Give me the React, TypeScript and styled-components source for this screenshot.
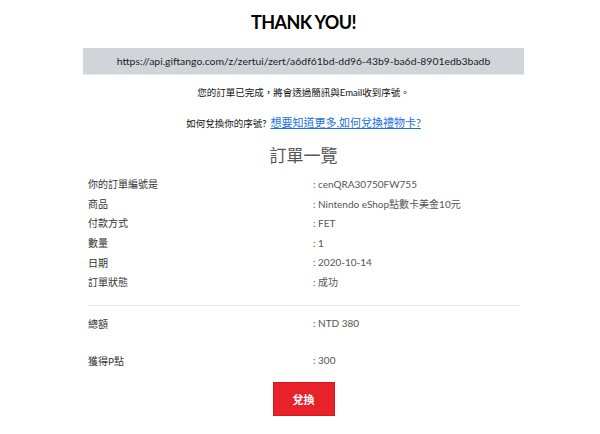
import React from 'react'
import styled, { createGlobalStyle } from 'styled-components'

const GlobalStyle = createGlobalStyle`
    body {
        margin: 0;
        background: #fff;
        font-family: Lato, "Noto Sans CJK TC", sans-serif;
        color: #333;
    }
`

const Page = styled.div`
    width: 441px;
    margin-left: 83px;
    padding-top: 10px;
    display: flex;
    flex-direction: column;
`

const Title = styled.h1`
    margin: 0;
    font-size: 18px;
    line-height: 24px;
    font-weight: 700;
    color: #000;
    text-align: center;
    letter-spacing: -0.6px;
`

const UrlBar = styled.div`
    margin-top: 14px;
    height: 27px;
    background: #d1d5da;
    border-bottom: 1px solid #e6e8eb;
    box-sizing: border-box;
    display: flex;
    align-items: center;
    justify-content: center;
    white-space: nowrap;
    font-size: 10.4px;
    color: #222;
`

const Message = styled.p<{ $gap: number }>`
    margin: ${p => p.$gap}px 0 0;
    font-size: 9.5px;
    line-height: 16px;
    color: #111;
    text-align: center;
`

const HelpLink = styled.a`
    font-size: 11px;
    color: #1a6fe0;
    text-decoration: underline;
    margin-left: 4px;
`

const Heading = styled.h2`
    margin: 12px 0 0;
    font-size: 17px;
    line-height: 24px;
    font-weight: 400;
    color: #555;
    text-align: center;
`

const DetailList = styled.div<{ $gap: number }>`
    margin-top: ${p => p.$gap}px;
    padding: 0 4px 0 5px;
    display: flex;
    flex-direction: column;
`

const DetailRow = styled.div<{ $height: number }>`
    display: grid;
    grid-template-columns: 225px 1fr;
    height: ${p => p.$height}px;
    align-items: center;
    font-size: 10px;
    color: #333;

    > span + span {
        color: #555;
    }
`

const Divider = styled.hr`
    margin: 13px 4px 0 5px;
    border: 0;
    border-top: 1px solid #e6e6e6;
`

const RedeemButton = styled.button`
    align-self: center;
    margin-top: 12px;
    width: 62px;
    height: 34px;
    background: #e8222b;
    border: 1px solid #e0141e;
    color: #fff;
    font-family: Lato, "Noto Sans CJK TC", sans-serif;
    font-size: 11px;
    font-weight: 700;
    cursor: pointer;
`

const orderDetails = [
    { label: '你的訂單編號是', value: 'cenQRA30750FW755' },
    { label: '商品', value: 'Nintendo eShop點數卡美金10元' },
    { label: '付款方式', value: 'FET' },
    { label: '數量', value: '1' },
    { label: '日期', value: '2020-10-14' },
    { label: '訂單狀態', value: '成功' },
]

const App: React.FC = () => {
    return (
        <>
            <GlobalStyle />
            <Page>
                <Title>THANK YOU!</Title>
                <UrlBar>
                    https://api.giftango.com/z/zertui/zert/a6df61bd-dd96-43b9-ba6d-8901edb3badb
                </UrlBar>
                <Message $gap={10}>
                    您的訂單已完成，將會透過簡訊與Email收到序號。
                </Message>
                <Message $gap={14}>
                    如何兌換你的序號?
                    <HelpLink href="#">想要知道更多,如何兌換禮物卡?</HelpLink>
                </Message>
                <Heading>訂單一覽</Heading>
                <DetailList $gap={6}>
                    {orderDetails.map(item => (
                        <DetailRow key={item.label} $height={19.6}>
                            <span>{item.label}</span>
                            <span>: {item.value}</span>
                        </DetailRow>
                    ))}
                </DetailList>
                <Divider />
                <DetailList $gap={8}>
                    <DetailRow $height={19.6}>
                        <span>總額</span>
                        <span>: NTD 380</span>
                    </DetailRow>
                </DetailList>
                <DetailList $gap={17.4}>
                    <DetailRow $height={19.6}>
                        <span>獲得P點</span>
                        <span>: 300</span>
                    </DetailRow>
                </DetailList>
                <RedeemButton>兌換</RedeemButton>
            </Page>
        </>
    )
}

export default App
